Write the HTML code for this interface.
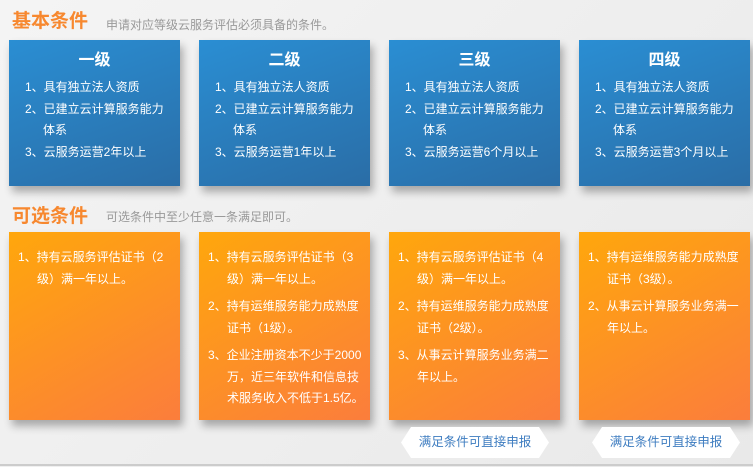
<!DOCTYPE html>
<html><head><meta charset="utf-8"><style>
*{margin:0;padding:0;box-sizing:border-box}
body{width:753px;height:467px;overflow:hidden;background:linear-gradient(135deg,#f4f4f4,#e9e9e9);font-family:"Liberation Sans","Noto Sans CJK SC",sans-serif;position:relative}
.h{position:absolute;left:12px;font-size:19px;font-weight:bold;color:#f7882f;letter-spacing:0px}
.sub{position:absolute;left:106px;font-size:12px;color:#999}
.card{position:absolute;width:171px;color:#fff;box-shadow:3px 6px 8px rgba(0,0,0,.3)}
.blue{top:40px;height:146px;background:linear-gradient(160deg,#2a8ed3,#2a6da6 100%)}
.org{top:232px;height:188px;background:linear-gradient(150deg,#ffa70c,#fb7d3c 100%)}
.card h3{text-align:center;font-size:16px;margin-top:11px;height:26px;line-height:20px}
.card ol{list-style:none;font-size:12px}
.blue ol{padding:0 8px 0 16px}
.blue li{line-height:21.5px;padding-left:18px;text-indent:-18px}
.org ol{padding:15px 6px 0 9px}
.org li{line-height:21.5px;padding-left:19px;text-indent:-19px;margin-bottom:6px}
.btn{position:absolute;top:427px;width:148px;height:31px;background:#fff;color:#3d7cc0;font-size:12.5px;text-align:center;line-height:31px;clip-path:polygon(10px 0,138px 0,148px 50%,138px 100%,10px 100%,0 50%);filter:drop-shadow(2px 2px 2px rgba(0,0,0,.3))}
.line{position:absolute;left:0;right:0;top:464px;height:2px;background:#ccc}
</style></head><body>
<div class="h" style="top:6px">基本条件</div>
<div class="sub" style="top:16px">申请对应等级云服务评估必须具备的条件。</div>
<div class="card blue" style="left:9px"><h3>一级</h3><ol><li>1、具有独立法人资质</li><li>2、已建立云计算服务能力体系</li><li>3、云服务运营2年以上</li></ol></div>
<div class="card blue" style="left:199px"><h3>二级</h3><ol><li>1、具有独立法人资质</li><li>2、已建立云计算服务能力体系</li><li>3、云服务运营1年以上</li></ol></div>
<div class="card blue" style="left:389px"><h3>三级</h3><ol><li>1、具有独立法人资质</li><li>2、已建立云计算服务能力体系</li><li>3、云服务运营6个月以上</li></ol></div>
<div class="card blue" style="left:579px"><h3>四级</h3><ol><li>1、具有独立法人资质</li><li>2、已建立云计算服务能力体系</li><li>3、云服务运营3个月以上</li></ol></div>
<div class="h" style="top:201px">可选条件</div>
<div class="sub" style="top:208px">可选条件中至少任意一条满足即可。</div>
<div class="card org" style="left:9px"><ol><li>1、持有云服务评估证书（2级）满一年以上。</li></ol></div>
<div class="card org" style="left:199px"><ol><li>1、持有云服务评估证书（3级）满一年以上。</li><li>2、持有运维服务能力成熟度证书（1级）。</li><li>3、企业注册资本不少于2000万，近三年软件和信息技术服务收入不低于1.5亿。</li></ol></div>
<div class="card org" style="left:389px"><ol><li>1、持有云服务评估证书（4级）满一年以上。</li><li>2、持有运维服务能力成熟度证书（2级）。</li><li>3、从事云计算服务业务满二年以上。</li></ol></div>
<div class="card org" style="left:579px"><ol><li>1、持有运维服务能力成熟度证书（3级）。</li><li>2、从事云计算服务业务满一年以上。</li></ol></div>
<div class="btn" style="left:401px">满足条件可直接申报</div>
<div class="btn" style="left:592px">满足条件可直接申报</div>
<div class="line"></div>
</body></html>
